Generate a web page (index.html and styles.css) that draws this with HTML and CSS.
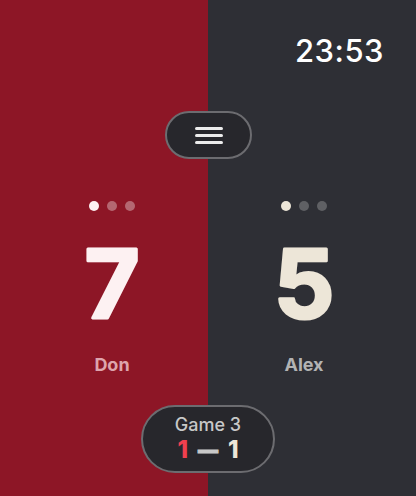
FILE: index.html
```html
<!DOCTYPE html>
<html>
<head>
<meta charset="utf-8">
<link rel="stylesheet" href="styles.css">
</head>
<body>
<div class="screen">
  <section class="side side-left">
    <div class="dots"><span class="dot on"></span><span class="dot"></span><span class="dot"></span></div>
    <svg class="score" width="120" height="80" viewBox="0 0 120 80"><text x="60" y="74" text-anchor="middle">7</text></svg>
    <div class="name">Don</div>
  </section>
  <section class="side side-right">
    <div class="dots"><span class="dot on"></span><span class="dot"></span><span class="dot"></span></div>
    <svg class="score" width="120" height="80" viewBox="0 0 120 80"><text x="60" y="74" text-anchor="middle">5</text></svg>
    <div class="name">Alex</div>
  </section>
  <div class="clock">23:53</div>
  <button class="menu" aria-label="Menu">
    <span></span><span></span><span></span>
  </button>
  <div class="game">
    <div class="game-title">Game 3</div>
    <div class="game-score"><span class="g-left">1</span><span class="g-dash">—</span><span class="g-right">1</span></div>
  </div>
</div>
</body>
</html>
```
FILE: styles.css
```css
* { box-sizing: border-box; }
html, body { margin: 0; padding: 0; }
body { font-family: Inter, "Noto Sans", sans-serif; }
.screen {
  position: relative;
  width: 416px;
  height: 496px;
  display: flex;
  overflow: hidden;
}
.side {
  flex: 1;
  display: flex;
  flex-direction: column;
  align-items: center;
  padding-top: 201px;
}
.side-left { background: #8d1626; padding-left: 16px; }
.side-right { background: #2e2f35; padding-right: 16px; }
.dots { display: flex; gap: 8px; }
.dot { width: 10px; height: 10px; border-radius: 50%; }
.side-left .dot { background: rgba(255,255,255,0.35); }
.side-left .dot.on { background: #fdf1f2; }
.side-right .dot { background: #5f6064; }
.side-right .dot.on { background: #ede6d8; }
.score {
  display: block;
  margin-top: 33px;
  overflow: visible;
}
.score text {
  font-family: Inter, "Noto Sans", sans-serif;
  font-size: 95px;
  font-weight: 700;
  stroke-width: 3px;
  stroke-linejoin: round;
  stroke-linecap: round;
  paint-order: stroke;
}
.side-left .score text { fill: #fdf1f2; stroke: #fdf1f2; }
.side-right .score text { fill: #ede6d8; stroke: #ede6d8; }
.name {
  margin-top: 30px;
  font-size: 18px;
  font-weight: 700;
  line-height: 22px;
}
.side-left .name { color: #dea4ad; }
.side-right .name { color: #b3b3b3; }
.clock {
  position: absolute;
  top: 32px;
  right: 32px;
  color: #fff;
  font-size: 31px;
  font-weight: 500;
  letter-spacing: 0.5px;
}
.menu {
  position: absolute;
  left: 165px;
  top: 111px;
  width: 87px;
  height: 48px;
  border-radius: 24px;
  border: 2px solid #6c6c70;
  background: #27272c;
  display: flex;
  flex-direction: column;
  align-items: center;
  justify-content: center;
  gap: 4px;
  padding: 0;
}
.menu span {
  width: 28px;
  height: 3px;
  border-radius: 2px;
  background: #ececec;
}
.game {
  position: absolute;
  left: 141px;
  top: 405px;
  width: 134px;
  height: 68px;
  border-radius: 34px;
  border: 2px solid #6c6c70;
  background: #27272c;
  display: flex;
  flex-direction: column;
  align-items: center;
  justify-content: center;
}
.game-title {
  color: #c8c8c8;
  font-size: 18px;
  font-weight: 500;
  line-height: 22px;
}
.game-score {
  display: flex;
  align-items: center;
  gap: 10px;
  font-size: 24px;
  font-weight: 800;
  line-height: 28px;
}
.g-left { color: #f0404f; }
.g-dash { color: #c8c8c8; font-weight: 900; font-size: 20px; -webkit-text-stroke: 1px #c8c8c8; }
.g-right { color: #ede6d8; }
```
